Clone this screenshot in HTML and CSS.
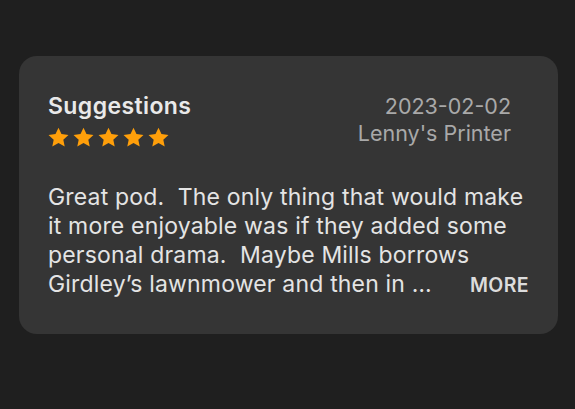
FILE: index.html
```html
<!DOCTYPE html>
<html lang="en">
<head>
    <meta charset="UTF-8">
    <meta name="viewport" content="width=device-width, initial-scale=1.0">
    <title>Review</title>
    <link rel="stylesheet" href="styles.css">
</head>
<body>
    <div class="review-card">
        <div class="review-header">
            <div class="review-title">
                <h2>Suggestions</h2>
                <div class="stars">
                    <svg viewBox="0 0 24 24"><path d="M12 .8l3.4 7.3 8 .9-5.9 5.5 1.6 7.9L12 18.4l-7.1 4 1.6-7.9L.6 9l8-.9z"/></svg>
                    <svg viewBox="0 0 24 24"><path d="M12 .8l3.4 7.3 8 .9-5.9 5.5 1.6 7.9L12 18.4l-7.1 4 1.6-7.9L.6 9l8-.9z"/></svg>
                    <svg viewBox="0 0 24 24"><path d="M12 .8l3.4 7.3 8 .9-5.9 5.5 1.6 7.9L12 18.4l-7.1 4 1.6-7.9L.6 9l8-.9z"/></svg>
                    <svg viewBox="0 0 24 24"><path d="M12 .8l3.4 7.3 8 .9-5.9 5.5 1.6 7.9L12 18.4l-7.1 4 1.6-7.9L.6 9l8-.9z"/></svg>
                    <svg viewBox="0 0 24 24"><path d="M12 .8l3.4 7.3 8 .9-5.9 5.5 1.6 7.9L12 18.4l-7.1 4 1.6-7.9L.6 9l8-.9z"/></svg>
                </div>
            </div>
            <div class="review-meta">
                <div>2023-02-02</div>
                <div>Lenny's Printer</div>
            </div>
        </div>
        <div class="review-body">
            <p>Great pod.&nbsp; The only thing that would make<br>it more enjoyable was if they added some<br>personal drama.&nbsp; Maybe Mills borrows</p>
            <div class="last-line">
                <span>Girdley’s lawnmower and then in …</span>
                <button class="more">MORE</button>
            </div>
        </div>
    </div>
</body>
</html>
```

FILE: styles.css
```css
body {
    margin: 0;
    padding: 56px 17px 0 19px;
    background-color: #1f1f1f;
    font-family: Inter, "Noto Sans", sans-serif;
    height: 409px;
    box-sizing: border-box;
}

.review-card {
    background-color: #353535;
    border-radius: 18px;
    padding: 36px 29px 0 29px;
    height: 278px;
    box-sizing: border-box;
}

.review-header {
    display: flex;
    justify-content: space-between;
    align-items: flex-start;
}

.review-title h2 {
    margin: 0;
    font-size: 23px;
    font-weight: 600;
    letter-spacing: 0.4px;
    color: #e9e9e9;
    line-height: 28px;
}

.stars {
    display: flex;
    gap: 4px;
    margin-top: 7px;
}

.stars svg {
    width: 21px;
    height: 21px;
    fill: #ff9f0a;
}

.review-meta {
    text-align: right;
    color: #a9a9a9;
    font-size: 21.5px;
    letter-spacing: 0;
    line-height: 27px;
    padding-right: 18px;
    margin-top: 1px;
}

.review-body {
    margin-top: 35px;
    color: #e4e4e4;
    font-size: 23px;
    letter-spacing: 0.18px;
    line-height: 29px;
    white-space: nowrap;
}

.review-body p {
    margin: 0;
}

.last-line {
    display: flex;
    justify-content: space-between;
    align-items: baseline;
}

.more {
    background: none;
    border: none;
    padding: 0;
    color: #dcdcdc;
    font-family: inherit;
    font-size: 19.5px;
    font-weight: 600;
    letter-spacing: 0.4px;
    cursor: pointer;
}
```
